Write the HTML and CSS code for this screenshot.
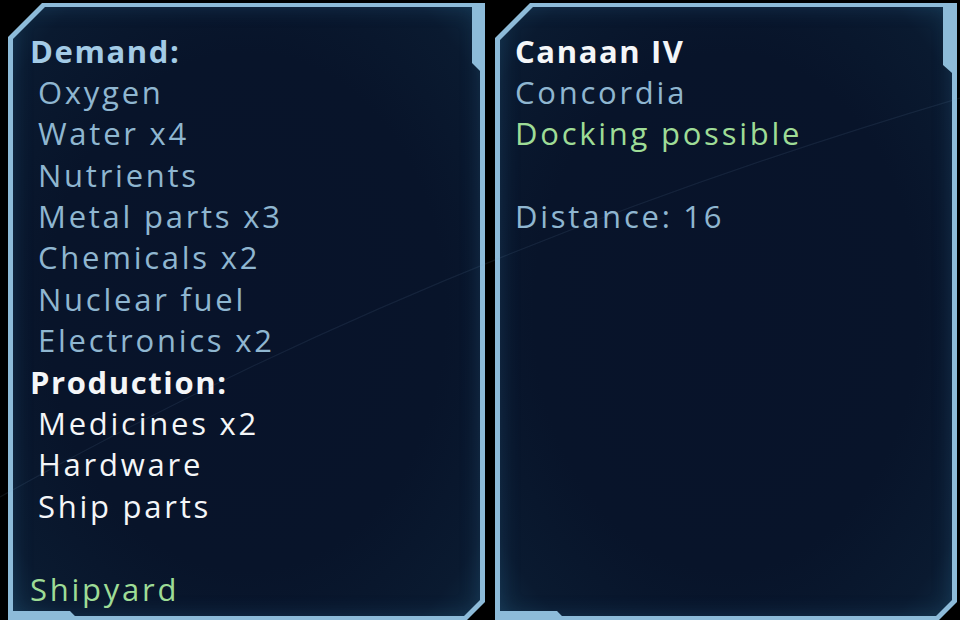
FILE: index.html
```html
<!DOCTYPE html>
<html lang="en">
<head>
<meta charset="utf-8">
<title>Station info</title>
<link rel="stylesheet" href="styles.css">
</head>
<body>
<div class="screen">
  <section class="panel panel-left">
    <div class="inner">
      <div class="line head demand">Demand:</div>
      <div class="line item demand-item">Oxygen</div>
      <div class="line item demand-item">Water x4</div>
      <div class="line item demand-item">Nutrients</div>
      <div class="line item demand-item">Metal parts x3</div>
      <div class="line item demand-item">Chemicals x2</div>
      <div class="line item demand-item">Nuclear fuel</div>
      <div class="line item demand-item">Electronics x2</div>
      <div class="line head production">Production:</div>
      <div class="line item production-item">Medicines x2</div>
      <div class="line item production-item">Hardware</div>
      <div class="line item production-item">Ship parts</div>
      <div class="line blank"></div>
      <div class="line green">Shipyard</div>
    </div>
  </section>
  <section class="panel panel-right">
    <div class="inner">
      <div class="line head name">Canaan IV</div>
      <div class="line muted">Concordia</div>
      <div class="line green">Docking possible</div>
      <div class="line blank"></div>
      <div class="line muted">Distance: 16</div>
    </div>
  </section>
  <svg class="arc" width="960" height="620" viewBox="0 0 960 620">
    <path d="M0,497 Q430,255 960,98" fill="none" stroke="#7fa6c8" stroke-width="1.2" opacity="0.11"/>
  </svg>
</div>
</body>
</html>
```

FILE: styles.css
```css
html, body {
  margin: 0;
  padding: 0;
  background: #000;
}

.screen {
  position: relative;
  width: 960px;
  height: 620px;
  overflow: hidden;
  display: flex;
  gap: 10px;
  padding: 3px 0 0 8px;
  box-sizing: border-box;
  font-family: "Open Sans", "Noto Sans", sans-serif;
  font-size: 31px;
  letter-spacing: 2.75px;
}

.panel {
  height: 617px;
  box-sizing: border-box;
  padding: 4px 5px;
  background: #8dbbd9;
}

.panel-left {
  width: 477px;
  clip-path: polygon(34px 0, 477px 0, 477px 599px, 459px 617px, 0 617px, 0 34px);
}

.panel-right {
  width: 462px;
  clip-path: polygon(35px 0, 462px 0, 462px 599px, 444px 617px, 0 617px, 0 35px);
}

.inner {
  height: 100%;
  box-sizing: border-box;
  background: radial-gradient(ellipse at 50% 50%, #08132a 0%, #08142a 60%, #0a1a30 88%, #0f2840 100%);
  box-shadow: inset 0 0 20px rgba(60, 130, 180, 0.25);
  padding-top: 23.5px;
}

.panel-left .inner {
  padding-left: 17px;
  clip-path: polygon(32px 0, 459px 0, 459px 56px, 467px 64px, 467px 593px, 451px 609px, 62px 609px, 57px 604px, 0 604px, 0 32px);
}

.panel-right .inner {
  padding-left: 15px;
  clip-path: polygon(33px 0, 443px 0, 443px 58px, 452px 66px, 452px 593px, 436px 609px, 62px 609px, 57px 604px, 0 604px, 0 33px);
}

.line {
  height: 41.4px;
  line-height: 41.4px;
  white-space: nowrap;
}

.head {
  font-weight: 700;
  letter-spacing: 1.6px;
}

.item {
  padding-left: 8px;
}

.demand {
  color: #a3cbe6;
}

.demand-item {
  color: #8fb6d0;
}

.production,
.production-item,
.name {
  color: #f4f6f8;
}

.muted {
  color: #8fb6d0;
}

.green {
  color: #9edc96;
}

.arc {
  position: absolute;
  left: 0;
  top: 0;
  pointer-events: none;
}
```
